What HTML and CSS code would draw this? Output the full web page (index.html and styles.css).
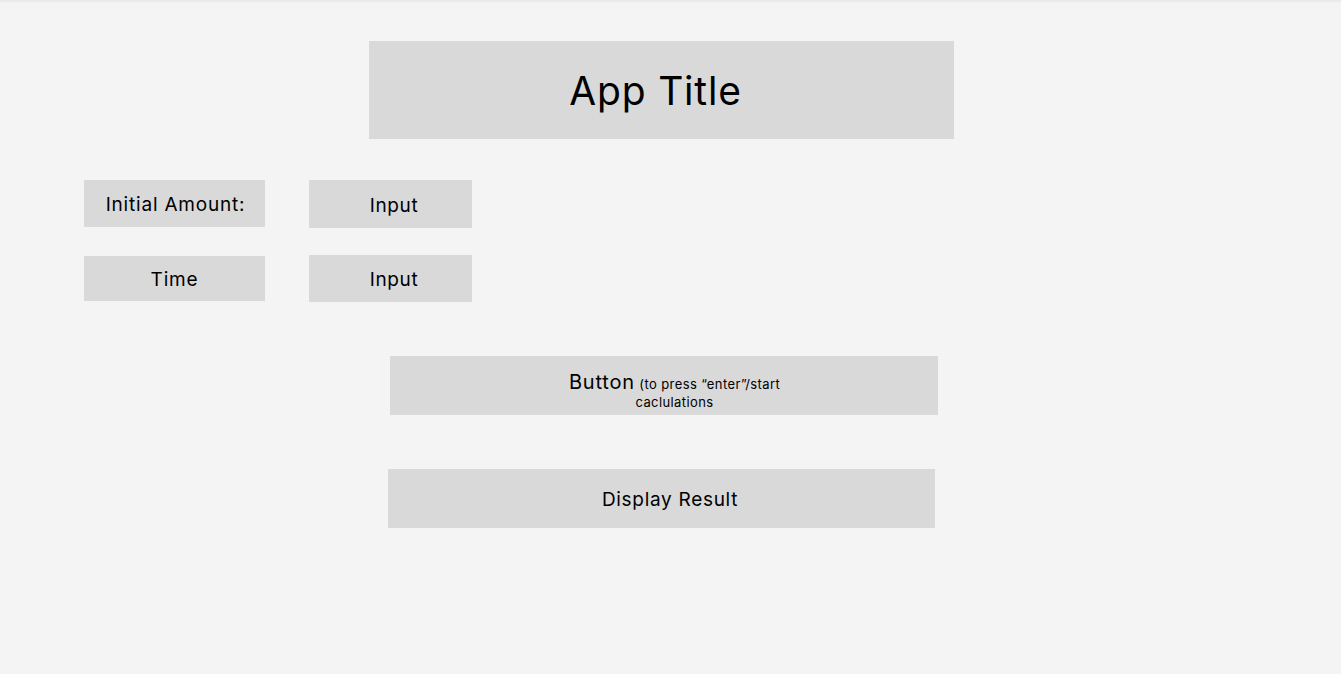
FILE: index.html
```html
<!DOCTYPE html>
<html lang="en">
<head>
<meta charset="utf-8">
<title>App Title</title>
<link rel="stylesheet" href="styles.css">
</head>
<body>
<div class="page">
  <header class="title">App Title</header>
  <div class="form">
    <div class="box label label-1">Initial Amount:</div>
    <div class="box input input-1">Input</div>
    <div class="box label label-2">Time</div>
    <div class="box input input-2">Input</div>
  </div>
  <div class="box action">
    <span class="action-text"><span class="action-main">Button</span> <span class="action-note">(to press “enter”/start<br>caclulations</span></span>
  </div>
  <div class="box result"><span class="result-text">Display Result</span></div>
</div>
</body>
</html>
```

FILE: styles.css
```css
* { box-sizing: border-box; }
html, body { margin: 0; padding: 0; }
body {
  background: #f4f4f4;
  font-family: Inter, "Noto Sans", sans-serif;
  color: #000;
  width: 1341px;
  height: 674px;
  overflow: hidden;
}
.page {
  height: 674px;
  padding-top: 41px;
  background: linear-gradient(#e6e6e6 0, #f0f0f0 2px, #f4f4f4 4px);
}
.box {
  background: #d9d9d9;
  display: flex;
  align-items: center;
  justify-content: center;
}
.title {
  margin-left: 369px;
  width: 585px;
  height: 98px;
  background: #d9d9d9;
  display: flex;
  align-items: center;
  justify-content: center;
  font-size: 39px;
  letter-spacing: 0.8px;
  padding-right: 12px;
  padding-top: 0;
}
.form {
  margin-top: 41px;
  margin-left: 84px;
  display: grid;
  grid-template-columns: 181px 163px;
  grid-template-rows: 48px 47px;
  column-gap: 44px;
  row-gap: 27px;
  align-items: start;
}
.label, .input {
  font-size: 19px;
  letter-spacing: 0.8px;
  padding-top: 2px;
}
.input { letter-spacing: 0.6px; }
.label-1 { height: 47px; padding-left: 2px; }
.input-1 { height: 48px; padding-left: 7px; }
.label-2 { height: 45px; margin-top: 1px; }
.input-2 { height: 47px; padding-left: 7px; }
.action {
  margin-top: 54px;
  margin-left: 390px;
  width: 548px;
  height: 59px;
}
.action-text {
  text-align: center;
  padding-left: 21px;
  line-height: 17px;
  padding-top: 13px;
}
.action-main { font-size: 20px; letter-spacing: 0.8px; }
.action-note { font-size: 13px; letter-spacing: 0.4px; }
.result {
  margin-top: 54px;
  margin-left: 388px;
  width: 547px;
  height: 59px;
  font-size: 19px;
  letter-spacing: 0.7px;
}
.result-text { padding-left: 17px; padding-top: 2px; }
```
